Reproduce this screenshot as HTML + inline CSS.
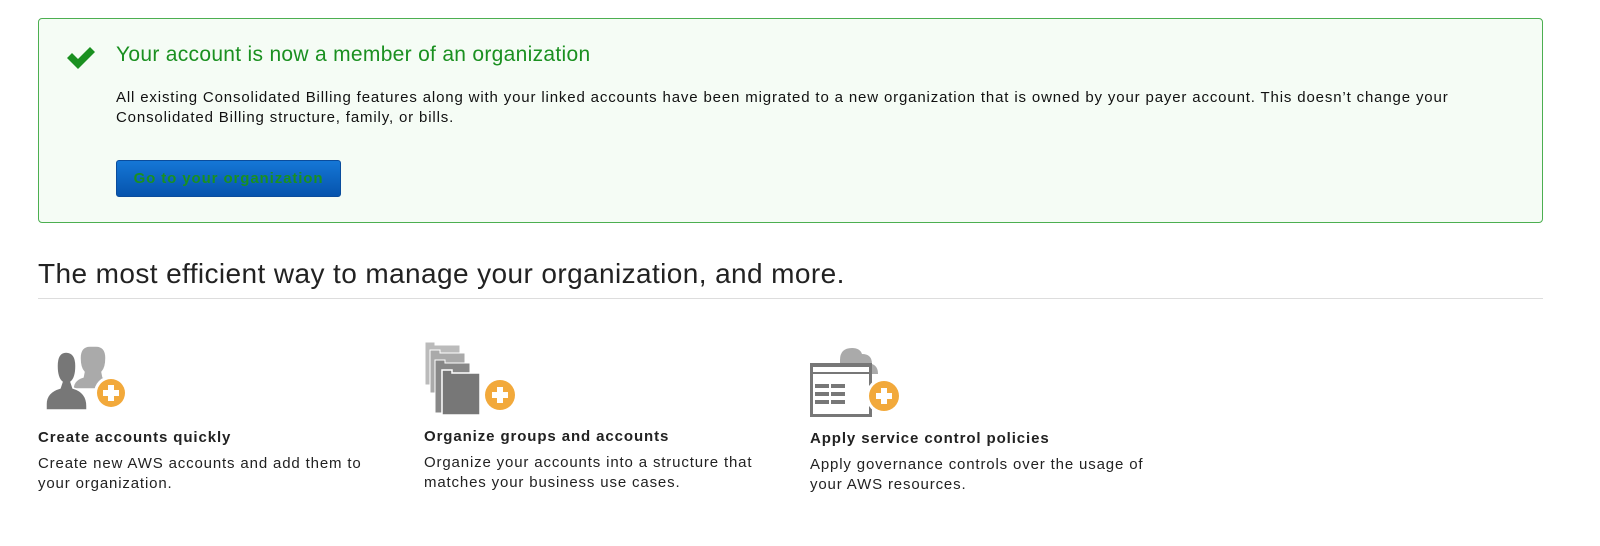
<!DOCTYPE html>
<html><head><style>
body{margin:0;width:1600px;height:546px;background:#fff;font-family:"Liberation Sans",sans-serif;position:relative;overflow:hidden}
.box{position:absolute;left:38px;top:18px;width:1503px;height:203px;border:1px solid #4caf50;border-radius:4px;background:#f5fcf5}
.t{position:absolute;left:77px;top:24px;font-size:21px;letter-spacing:0.3px;color:#1a9020}
.p{position:absolute;left:77px;top:69px;font-size:15px;letter-spacing:0.85px;line-height:20px;color:#111;width:1400px}
.btn{position:absolute;left:77px;top:141px;width:223px;height:35px;border:1px solid #0a4c9c;border-radius:3px;background:linear-gradient(#1577d6,#0654ad);color:#1a9020;font-weight:bold;font-size:15px;letter-spacing:0.9px;line-height:35px;text-align:center}
h1{position:absolute;left:38px;top:258px;margin:0;font-weight:normal;font-size:28px;letter-spacing:0.4px;color:#222}
.hr{position:absolute;left:38px;top:298px;width:1505px;height:1px;background:#ddd}
.f{position:absolute;font-size:15px;letter-spacing:0.85px;color:#222;line-height:20px}
.f b{display:block;font-size:15px;letter-spacing:0.9px;margin-bottom:6px}
</style></head><body>
<div class="box">
<svg style="position:absolute;left:26px;top:26px" width="32" height="26" viewBox="0 0 32 26"><path d="M2 13 L7 8 L13 14 L25 2 L30 7 L13 24 Z" fill="#1a9020"/></svg>
<div class="t">Your account is now a member of an organization</div>
<div class="p">All existing Consolidated Billing features along with your linked accounts have been migrated to a new organization that is owned by your payer account. This doesn’t change your Consolidated Billing structure, family, or bills.</div>
<div class="btn">Go to your organization</div>
</div>
<h1>The most efficient way to manage your organization, and more.</h1>
<div class="hr"></div>
<svg style="position:absolute;left:40px;top:340px" width="95" height="75">
<path d="M56 6 q10 0 10 12 q0 10 -4 14 l1 5 q10 3 10 12 l-40 0 q0 -9 10 -12 l1 -5 q-4 -4 -4 -14 q0 -12 10 -12 z" fill="#aaa" stroke="#fff" stroke-width="1.5"/>
<path d="M26 12 q10 0 10 14 q0 12 -5 16 l2 6 q14 4 14 18 l0 4 l-41 0 l0 -6 q0 -12 14 -16 l2 -6 q-5 -4 -5 -16 q0 -14 9 -14 z" fill="#777" stroke="#fff" stroke-width="1.5"/>
<circle cx="71" cy="53" r="17" fill="#fff"/><circle cx="71" cy="53" r="14" fill="#f2a93b"/>
<path d="M68 45h6v5h5v6h-5v5h-6v-5h-5v-6h5z" fill="#fff"/></svg>
<svg style="position:absolute;left:420px;top:340px" width="100" height="80">
<path d="M5 2h10v3h25v40h-35z" fill="#bbb" stroke="#fff"/>
<path d="M10 10h10v3h25v40h-35z" fill="#aaa" stroke="#fff"/>
<path d="M15 20h10v3h25v50h-35z" fill="#888" stroke="#fff"/>
<path d="M22 30h10v3h28v42h-38z" fill="#777" stroke="#fff" stroke-width="1.5"/>
<circle cx="80" cy="55" r="18" fill="#fff"/><circle cx="80" cy="55" r="15" fill="#f2a93b"/>
<path d="M77 47h6v5h5v6h-5v5h-6v-5h-5v-6h5z" fill="#fff"/></svg>
<svg style="position:absolute;left:808px;top:340px" width="100" height="80">
<path d="M32 20 q0 -12 12 -12 q8 0 10 6 q10 0 10 10 q6 2 6 10 l-38 0 z" fill="#aaa"/>
<rect x="2" y="23" width="62" height="54" fill="#777"/>
<rect x="5" y="27" width="56" height="5" fill="#fff"/>
<rect x="5" y="34" width="56" height="40" fill="#fff"/>
<g fill="#777"><rect x="7" y="44" width="14" height="4"/><rect x="23" y="44" width="14" height="4"/><rect x="7" y="52" width="14" height="4"/><rect x="23" y="52" width="14" height="4"/><rect x="7" y="60" width="14" height="4"/><rect x="23" y="60" width="14" height="4"/></g>
<circle cx="76" cy="56" r="18" fill="#fff"/><circle cx="76" cy="56" r="15" fill="#f2a93b"/>
<path d="M73 48h6v5h5v6h-5v5h-6v-5h-5v-6h5z" fill="#fff"/></svg>
<div class="f" style="left:38px;top:428px"><b>Create accounts quickly</b>Create new AWS accounts and add them to<br>your organization.</div>
<div class="f" style="left:424px;top:427px"><b>Organize groups and accounts</b>Organize your accounts into a structure that<br>matches your business use cases.</div>
<div class="f" style="left:810px;top:429px"><b>Apply service control policies</b>Apply governance controls over the usage of<br>your AWS resources.</div>
</body></html>
